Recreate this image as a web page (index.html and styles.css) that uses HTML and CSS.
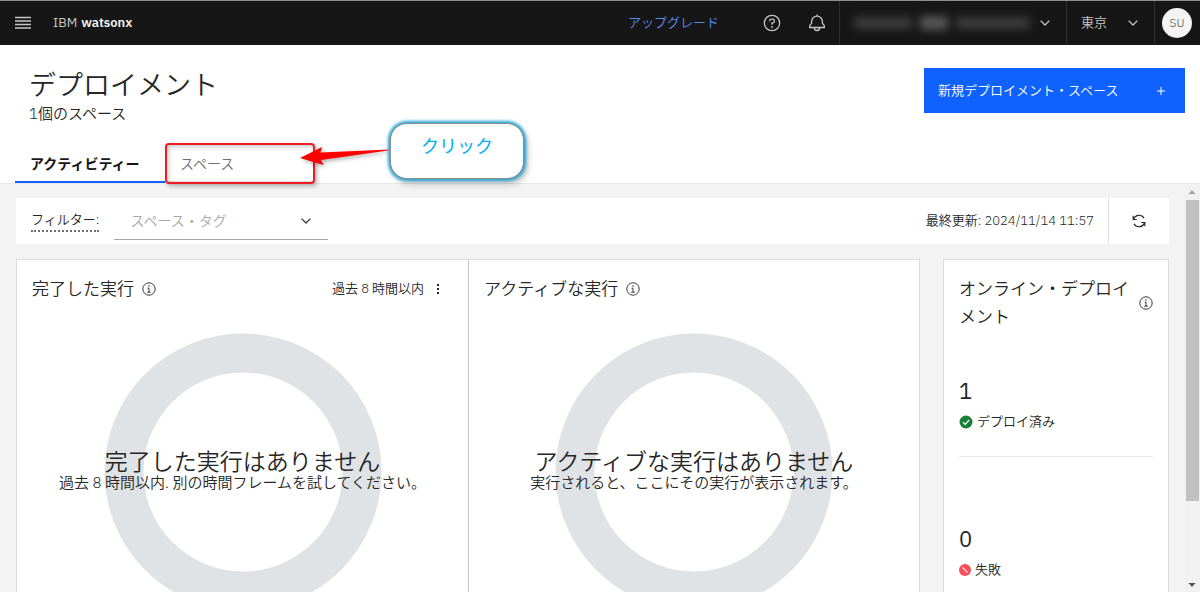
FILE: index.html
```
<!DOCTYPE html>
<html lang="ja">
<head>
    <meta charset="UTF-8">
    <meta name="viewport" content="width=device-width, initial-scale=1.0">
    <title>IBM watsonx</title>
    <link rel="stylesheet" href="styles.css">
</head>
<body>
    <header class="topbar">
        <button class="menu-button" aria-label="メニュー">
            <svg width="16" height="14" viewBox="0 0 16 14"><path d="M0 1.500h16M0 5h16M0 8.500h16M0 12h16" stroke="#c6c6c6" stroke-width="1.400"/></svg>
        </button>
        <a class="brand" href="#">IBM <b>watsonx</b></a>
        <a class="upgrade" href="#">アップグレード</a>
        <button class="icon-button" aria-label="ヘルプ">
            <svg width="18" height="18" viewBox="0 0 18 18" fill="none" stroke="#c6c6c6" stroke-width="1.300"><circle cx="9" cy="9" r="7.700"/><path d="M6.600 7.300V7a1.900 1.900 0 0 1 1.900-1.900h1A1.900 1.900 0 0 1 11.400 7v.3A1.800 1.800 0 0 1 9.600 9H9v1.800"/><circle cx="9" cy="13" r=".9" fill="#c6c6c6" stroke="none"/></svg>
        </button>
        <button class="icon-button" aria-label="通知">
            <svg width="18" height="18" viewBox="0 0 18 18" fill="none" stroke="#c6c6c6" stroke-width="1.300"><path d="M9 .5v2M1.700 13.500v-2l1.900-2.200V7.600a5.400 5.400 0 0 1 10.800 0v1.700l1.900 2.200v2zM6.300 13.800a2.700 2.700 0 0 0 5.400 0"/></svg>
        </button>
        <button class="account" aria-label="アカウント">
            <span class="masked"><i></i><i></i><i></i></span>
            <svg width="10" height="6" viewBox="0 0 10 6"><path d="M.6.6L5 5 9.400.6" fill="none" stroke="#c6c6c6" stroke-width="1.300"/></svg>
        </button>
        <button class="region">
            東京
            <svg width="10" height="6" viewBox="0 0 10 6"><path d="M.6.6L5 5 9.400.6" fill="none" stroke="#c6c6c6" stroke-width="1.300"/></svg>
        </button>
        <div class="profile"><button class="avatar">SU</button></div>
    </header>

    <section class="page-header">
        <div class="heading-row">
            <div>
                <h1>デプロイメント</h1>
                <p class="space-count">1個のスペース</p>
            </div>
            <button class="primary">
                新規デプロイメント・スペース
                <svg width="8" height="8" viewBox="0 0 8 8"><path d="M4 0v8M0 4h8" stroke="#fff"/></svg>
            </button>
        </div>
        <nav class="tabs">
            <a class="tab active" href="#">アクティビティー</a>
            <a class="tab" href="#">スペース
                <span class="highlight"></span>
                <svg class="arrow" width="90" height="22" viewBox="0 0 90 22"><path d="M0 12L22 1l-1.500 5.500L90 3.500v.8L21 14l2.500 5z" fill="#f00"/></svg>
                <span class="callout">クリック</span>
            </a>
        </nav>
    </section>

    <div class="workspace">
        <main>
            <div class="filter-bar">
                <label for="tagFilter">フィルター:</label>
                <div class="select-box">
                    <select id="tagFilter">
                        <option>スペース・タグ</option>
                    </select>
                    <svg width="10" height="6" viewBox="0 0 10 6"><path d="M.6.6L5 5 9.400.6" fill="none" stroke="#393939" stroke-width="1.300"/></svg>
                </div>
                <span class="updated">最終更新: 2024/11/14 11:57</span>
                <button class="refresh" aria-label="更新">
                    <svg width="14" height="14" viewBox="0 0 14 14" fill="none" stroke="#262626" stroke-width="1.200"><path d="M1.500 5.500A5.700 5.700 0 0 1 12 4.200M12.500 8.500A5.700 5.700 0 0 1 2 9.800"/><path d="M1.200 1.800v3.700h3.600M12.800 12.200V8.500H9.200"/></svg>
                </button>
            </div>

            <div class="cards">
                <div class="runs">
                    <section class="card">
                        <div class="card-title">
                            <h2>完了した実行</h2>
                            <svg class="info" width="14" height="14" viewBox="0 0 14 14"><circle cx="7" cy="7" r="6.200"/><path d="M5.500 6.200H7v4M5.200 10.200h3.600"/><circle class="dot" cx="7" cy="4" r=".8"/></svg>
                            <span class="period">過去 8 時間以内</span>
                            <button class="more" aria-label="オプション">
                                <svg width="4" height="12" viewBox="0 0 4 12"><path d="M1 1h2v2H1zM1 5h2v2H1zM1 9h2v2H1z" fill="#262626"/></svg>
                            </button>
                        </div>
                        <div class="chart">
                            <svg width="278" height="278" viewBox="0 0 278 278"><circle cx="139" cy="139" r="119" fill="none" stroke="#dfe3e6" stroke-width="39"/></svg>
                            <div class="empty">
                                <h3>完了した実行はありません</h3>
                                <p>過去 8 時間以内. 別の時間フレームを試してください。</p>
                            </div>
                        </div>
                    </section>
                    <section class="card">
                        <div class="card-title">
                            <h2>アクティブな実行</h2>
                            <svg class="info" width="14" height="14" viewBox="0 0 14 14"><circle cx="7" cy="7" r="6.200"/><path d="M5.500 6.200H7v4M5.200 10.200h3.600"/><circle class="dot" cx="7" cy="4" r=".8"/></svg>
                        </div>
                        <div class="chart">
                            <svg width="278" height="278" viewBox="0 0 278 278"><circle cx="139" cy="139" r="119" fill="none" stroke="#dfe3e6" stroke-width="39"/></svg>
                            <div class="empty">
                                <h3>アクティブな実行はありません</h3>
                                <p>実行されると、ここにその実行が表示されます。</p>
                            </div>
                        </div>
                    </section>
                </div>

                <section class="card online">
                    <div class="card-title">
                        <h2>オンライン・デプロイメント</h2>
                        <svg class="info" width="14" height="14" viewBox="0 0 14 14"><circle cx="7" cy="7" r="6.200"/><path d="M5.500 6.200H7v4M5.200 10.200h3.600"/><circle class="dot" cx="7" cy="4" r=".8"/></svg>
                    </div>
                    <div class="stat">
                        <span class="number">1</span>
                        <span class="status">
                            <svg width="14" height="14" viewBox="0 0 14 14"><circle cx="7" cy="7" r="6.500" fill="#198038"/><path d="M4 7.200l2.200 2.100L10.200 5" fill="none" stroke="#fff" stroke-width="1.200"/></svg>
                            デプロイ済み
                        </span>
                    </div>
                    <div class="stat">
                        <span class="number">0</span>
                        <span class="status">
                            <svg width="12" height="12" viewBox="0 0 12 12"><circle cx="6" cy="6" r="6" fill="#fa4d56"/><path d="M3.300 3.300l5.400 5.400" stroke="#fff" stroke-width="1.100"/></svg>
                            失敗
                        </span>
                    </div>
                </section>
            </div>
        </main>
        <div class="scrollbar">
            <svg width="14" height="16" viewBox="0 0 14 16"><path d="M3.500 10L7 6l3.500 4z" fill="#a3a3a3"/></svg>
            <div class="track"><div class="thumb"></div></div>
            <svg width="14" height="16" viewBox="0 0 14 16"><path d="M3.500 7h7L7 11z" fill="#505050"/></svg>
        </div>
    </div>
</body>
</html>
```
FILE: styles.css
```
* {
    box-sizing: border-box;
}

body {
    display: flex;
    flex-direction: column;
    height: 100vh;
    margin: 0;
    overflow: hidden;
    background-color: #f3f3f3;
    color: #262626;
    font-family: "IBM Plex Sans", "Open Sans", "Noto Sans CJK JP", sans-serif;
    font-size: 13px;
    font-weight: 350;
    line-height: 20px;
}

h1,
h2,
h3,
p {
    margin: 0;
    font-weight: 350;
}

a {
    color: inherit;
    text-decoration: none;
}

button {
    padding: 0;
    border: none;
    background: none;
    color: inherit;
    font: inherit;
    cursor: pointer;
}

svg {
    display: block;
    flex-shrink: 0;
}

/* top bar */
.topbar {
    display: flex;
    align-items: stretch;
    flex-shrink: 0;
    height: 45px;
    border-top: 1px solid #8d8d8d;
    background-color: #161616;
    color: #c6c6c6;
}

.topbar button,
.topbar a {
    display: flex;
    align-items: center;
}

.menu-button {
    justify-content: center;
    width: 45px;
}

.brand {
    gap: 4px;
    margin-right: auto;
    padding-left: 8px;
    font-weight: 400;
}

.brand b {
    color: #f4f4f4;
    font-weight: 600;
}

.upgrade {
    margin-right: 30px;
}

.topbar .upgrade {
    color: #5c8df0;
}

.icon-button {
    justify-content: center;
    width: 45px;
}

.topbar .account {
    justify-content: space-between;
    width: 227px;
    padding: 0 16px 0 14px;
    border-left: 1px solid #303030;
}

.masked {
    display: flex;
    gap: 8px;
    align-items: center;
    filter: blur(4px);
}

.masked i {
    width: 58px;
    height: 12px;
    background-color: #3c3c3c;
}

.masked i:nth-child(2) {
    width: 28px;
    height: 14px;
    background-color: #565656;
}

.masked i:nth-child(3) {
    width: 74px;
}

.topbar .region {
    justify-content: space-between;
    width: 88px;
    padding: 0 16px 0 14px;
    border-left: 1px solid #303030;
}

.profile {
    display: flex;
    align-items: center;
    padding: 0 8px 0 7px;
    border-left: 1px solid #303030;
}

.profile .avatar {
    justify-content: center;
    width: 30px;
    height: 30px;
    border-radius: 50%;
    background-color: #f4f4f4;
    color: #525252;
    font-size: 12px;
}

/* page header */
.page-header {
    flex-shrink: 0;
    border-bottom: 1px solid #e8e8e8;
    background-color: #ffffff;
}

.heading-row {
    display: flex;
    justify-content: space-between;
    align-items: flex-start;
    padding: 23px 15px 0 29px;
}

h1 {
    font-size: 27px;
    line-height: 34px;
}

.space-count {
    font-size: 15px;
    line-height: 24px;
}

.primary {
    display: flex;
    justify-content: space-between;
    align-items: center;
    width: 261px;
    height: 45px;
    padding: 0 20px 0 14px;
    background-color: #0f62fe;
    color: #ffffff;
}

.tabs {
    display: flex;
    padding: 20px 15px 0;
}

.tab {
    position: relative;
    width: 150px;
    height: 37px;
    padding: 8px 15px;
    border-bottom: 2px solid #e0e0e0;
    color: #6f6f6f;
    font-size: 14px;
}

.tab.active {
    border-bottom-color: #0f62fe;
    color: #161616;
    font-weight: 600;
}

/* annotation over the second tab */
.highlight {
    position: absolute;
    top: -3px;
    left: 0;
    width: 150px;
    height: 41px;
    border: 2px solid #ee1c25;
    border-radius: 4px;
    box-shadow: 2px 2px 4px rgba(0, 0, 0, 0.3), inset 2px 2px 4px rgba(0, 0, 0, 0.2);
}

.arrow {
    position: absolute;
    top: 0;
    left: 135px;
    filter: drop-shadow(2px 2px 2px rgba(0, 0, 0, 0.3));
}

.callout {
    position: absolute;
    top: -23px;
    left: 225px;
    width: 134px;
    height: 56px;
    border: 1px solid #8a8a8a;
    border-radius: 17px;
    background-color: #ffffff;
    box-shadow: 0 0 3px 2px #2aa8d8, 3px 4px 7px rgba(0, 0, 0, 0.3);
    color: #00b0f0;
    font-size: 18px;
    font-weight: 400;
    line-height: 46px;
    text-align: center;
}

/* workspace */
.workspace {
    display: flex;
    flex: 1;
    min-height: 0;
}

main {
    flex: 1;
    min-width: 0;
    overflow: hidden;
    padding: 14px 16px 0;
}

.filter-bar {
    display: flex;
    align-items: center;
    height: 46px;
    margin-bottom: 15px;
    padding-left: 15px;
    background-color: #ffffff;
}

.filter-bar label {
    border-bottom: 2px dotted #6f6f6f;
}

.select-box {
    display: flex;
    align-items: center;
    width: 214px;
    height: 38px;
    margin-left: 15px;
    padding-right: 17px;
    border-bottom: 1px solid #a8a8a8;
}

.select-box select {
    flex: 1;
    appearance: none;
    padding: 0 16px;
    border: none;
    background: none;
    color: #a8a8a8;
    font: inherit;
    font-size: 14px;
}

.updated {
    margin-left: auto;
    padding-right: 14px;
}

.refresh {
    display: flex;
    justify-content: center;
    align-items: center;
    align-self: stretch;
    width: 61px;
    border-left: 1px solid #e0e0e0;
}

.cards {
    display: grid;
    grid-template-columns: 4fr 1fr;
    gap: 23px;
}

.runs {
    display: grid;
    grid-template-columns: 1fr 1fr;
}

.card {
    padding: 15px;
    border: 1px solid #dcdcdc;
    background-color: #ffffff;
}

.runs .card + .card {
    border-left-color: #c6c6c6;
}

.runs .card:first-child {
    border-right: none;
}

.card-title {
    display: flex;
    align-items: center;
    gap: 8px;
}

h2 {
    font-size: 17px;
    line-height: 28px;
}

.info {
    fill: none;
    stroke: #393939;
}

.info .dot {
    fill: #393939;
    stroke: none;
}

.period {
    margin-left: auto;
}

.more {
    padding: 0 13px 0 4px;
}

.chart {
    display: grid;
    place-items: center;
    margin: 30px -15px 0;
}

.chart > * {
    grid-area: 1 / 1;
}

.empty {
    padding-bottom: 2px;
    text-align: center;
}

h3 {
    font-size: 23px;
    line-height: 24px;
}

.empty p {
    font-size: 15px;
    line-height: 20px;
}

.online .card-title {
    justify-content: space-between;
}

.stat {
    padding: 44px 0 24px;
    border-bottom: 1px solid #e8e8e8;
}

.stat + .stat {
    padding-top: 66px;
}

.number {
    display: block;
    font-size: 22px;
    font-weight: 400;
    line-height: 32px;
}

.status {
    display: flex;
    align-items: center;
    gap: 4px;
    margin-top: 5px;
}

/* scrollbar */
.scrollbar {
    display: flex;
    flex-direction: column;
    width: 15px;
    padding-right: 1px;
    background-color: #f1f1f1;
}

.track {
    flex: 1;
}

.thumb {
    width: 13px;
    height: 80%;
    margin-left: 1px;
    background-color: #c1c1c1;
}
```
